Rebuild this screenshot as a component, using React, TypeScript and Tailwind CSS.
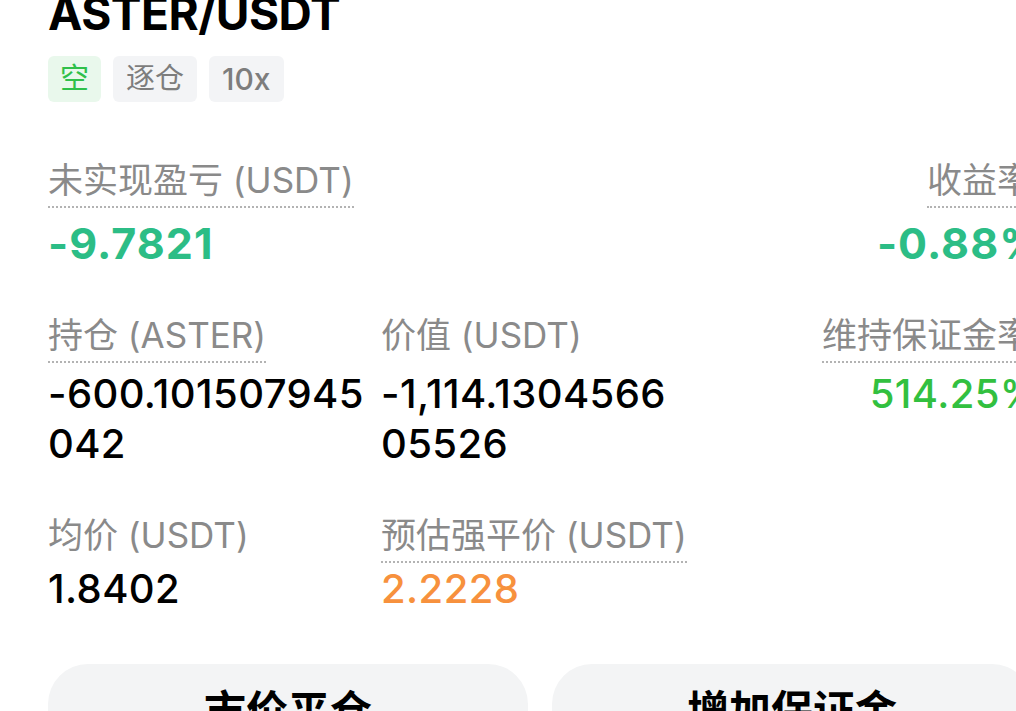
const font = { fontFamily: '"Inter", "Noto Sans CJK SC", sans-serif' };

type Stat = {
  label: string;
  dotted?: boolean;
  lines: string[];
  color: string;
  align?: "left" | "right";
};

const Label = ({ text, dotted }: { text: string; dotted?: boolean }) => (
  <span
    className={`inline-block text-[35px] leading-[44px] pb-1 text-[#8a8a8a] border-b-2 border-dotted ${
      dotted ? "border-[#b3b3b3]" : "border-transparent"
    }`}
  >
    {text}
  </span>
);

const StatCell = ({ stat, valueClass }: { stat: Stat; valueClass: string }) => (
  <div className={stat.align === "right" ? "text-right" : "text-left"}>
    <Label text={stat.label} dotted={stat.dotted} />
    <div className={`${valueClass} ${stat.color} ${stat.align === "right" ? "-mr-[8px]" : ""}`}>
      {stat.lines.map((l) => (
        <div key={l}>{l}</div>
      ))}
    </div>
  </div>
);

const App = () => {
  const rows: Stat[][] = [
    [
      { label: "持仓 (ASTER)", dotted: true, lines: ["-600.101507945", "042"], color: "text-black" },
      { label: "价值 (USDT)", lines: ["-1,114.1304566", "05526"], color: "text-black" },
      { label: "维持保证金率", dotted: true, lines: ["514.25%"], color: "text-[#32c03f]", align: "right" },
    ],
    [
      { label: "均价 (USDT)", lines: ["1.8402"], color: "text-black" },
      { label: "预估强平价 (USDT)", dotted: true, lines: ["2.2228"], color: "text-[#f7913d]" },
    ],
  ];

  return (
    <div className="w-[1016px] h-[711px] overflow-hidden bg-white" style={font}>
      <div className="w-[1080px] px-12">
        <h1 className="-mt-[10px] text-[46px] leading-none font-bold tracking-[-0.01em] text-black">
          ASTER/USDT
        </h1>

        <div className="flex gap-3 mt-5">
          <span className="h-[46px] px-[12px] flex items-center rounded-md bg-[#e9f8ec] text-[#2fc04a] text-[29px]">
            空
          </span>
          <span className="h-[46px] px-[13px] flex items-center rounded-md bg-[#f3f4f6] text-[#7d7d7d] text-[29px]">
            逐仓
          </span>
          <span className="h-[46px] px-[13px] flex items-center rounded-md bg-[#f3f4f6] text-[#7d7d7d] text-[30px] font-medium">
            10x
          </span>
        </div>

        <div className="flex justify-between mt-[56px]">
          <div>
            <Label text="未实现盈亏 (USDT)" dotted />
            <div className="mt-[11px] text-[43px] leading-[48px] font-bold tracking-wide text-[#2cbd86]">
              -9.7821
            </div>
          </div>
          <div className="text-right">
            <Label text="收益率" dotted />
            <div className="mt-[11px] -mr-[12px] text-[43px] leading-[48px] font-bold tracking-wide text-[#2cbd86]">
              -0.88%
            </div>
          </div>
        </div>

        <div className="grid grid-cols-[333px_333px_1fr] mt-[46px]">
          {rows[0].map((s) => (
            <StatCell
              key={s.label}
              stat={s}
              valueClass="mt-[6px] text-[40px] leading-[50px] font-medium tracking-[0.01em]"
            />
          ))}
        </div>

        <div className="grid grid-cols-[333px_333px_1fr] mt-[44px]">
          {rows[1].map((s) => (
            <StatCell
              key={s.label}
              stat={s}
              valueClass="mt-px text-[40px] leading-[50px] font-medium tracking-[0.01em]"
            />
          ))}
        </div>

        <div className="grid grid-cols-2 gap-6 mt-[50px]">
          <button className="h-[92px] rounded-[40px] bg-[#f3f4f5] text-[42px] font-bold text-black">
            市价平仓
          </button>
          <button className="h-[92px] rounded-[40px] bg-[#f3f4f5] text-[42px] font-bold text-black">
            增加保证金
          </button>
        </div>
      </div>
    </div>
  );
};

export default App;
